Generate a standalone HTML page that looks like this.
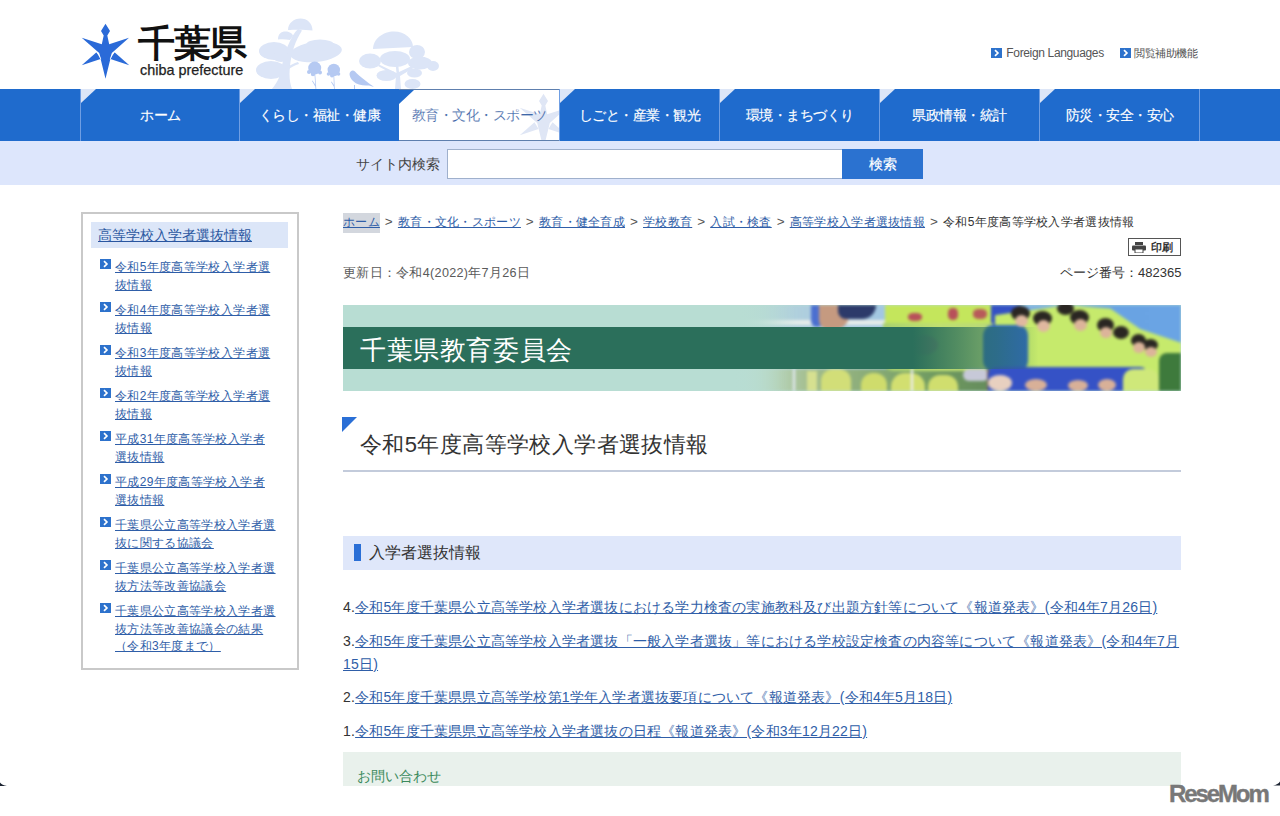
<!DOCTYPE html>
<html lang="ja">
<head>
<meta charset="utf-8">
<title>令和5年度高等学校入学者選抜情報 - 千葉県</title>
<style>
*{box-sizing:border-box;margin:0;padding:0}
html,body{width:1280px;height:816px;overflow:hidden;background:#fff}
body{position:relative;font-family:"Liberation Sans",sans-serif;color:#333}
.abs{position:absolute}
a{color:#1f5fb0;text-decoration:underline}
/* header */
#logo-txt{left:138px;top:22px;font-size:37px;font-weight:bold;color:#111;letter-spacing:-1px;line-height:44px;white-space:nowrap}
#logo-en{left:140px;top:62px;font-size:14.4px;color:#222;-webkit-text-stroke:.25px #222;line-height:16px;white-space:nowrap}
.tl{top:46px;font-size:12px;color:#555;line-height:14px;white-space:nowrap}
.ico{display:inline-block;width:11px;height:10px;vertical-align:top}
/* nav */
#nav{left:0;top:89px;width:1280px;height:52px;background:#1f6bcd}
.tab{position:absolute;top:0;width:160px;height:52px;border-left:1px solid #6f9ee3;color:#fff;font-size:14px;letter-spacing:-.5px;-webkit-text-stroke:.15px #fff;text-align:center;line-height:52px;white-space:nowrap}
.tab:before{content:"";position:absolute;left:0;top:0;border-top:14px solid #dde6f7;border-right:15px solid transparent}
.tab.act{background:#fff;color:#3f67a8;border-top:1px solid #5e7fae;border-bottom:1px solid #5e7fae;line-height:50px;overflow:hidden;border-left:0}
.tab.act:before{border-top-color:#1f6bcd;left:0}
/* search */
#sbar{left:0;top:141px;width:1280px;height:44px;background:#dde6fc}
#slabel{left:356px;top:156px;font-size:14px;color:#444;line-height:16px;white-space:nowrap}
#sinput{left:447px;top:149px;width:395px;height:30px;background:#fff;border:1px solid #9fb0cc;border-right:0}
#sbtn{left:842px;top:149px;width:81px;height:30px;background:#2b72d0;color:#fff;font-size:14px;-webkit-text-stroke:.2px #fff;line-height:30px;text-align:center}
/* sidebar */
#side{left:81px;top:212px;width:218px;height:458px;border:2px solid #c9c9c9}
#side-h{left:91px;top:222px;width:197px;height:26px;background:#dce6f8}
#side-h a{position:absolute;left:7px;top:5px;font-size:14px;line-height:16px;color:#2a56a0;white-space:nowrap}
.si{position:absolute;left:100px;width:185px}
.si .ico{position:absolute;left:0;top:2px}
.si a{position:absolute;left:15px;top:2px;width:175px;font-size:12px;letter-spacing:.35px;line-height:17.5px;color:#2f5ea8;white-space:nowrap}
/* main */
#bc{left:343px;top:214px;font-size:12px;letter-spacing:.3px;line-height:16px;color:#333;white-space:nowrap}
#bc a{color:#2f5ea8}
.sep{display:inline-block;width:18px;text-align:center;font-size:13.5px;color:#555}
#bc .hl{background:#d3d7de;padding:2px 0 4px}
#upd{left:343px;top:265px;font-size:12.6px;letter-spacing:.3px;color:#5a5a5a;line-height:16px;white-space:nowrap}
#print{left:1128px;top:238px;width:53px;height:18px;border:1px solid #555;background:#fff}
#pno{left:1060px;top:265px;width:121px;text-align:right;font-size:13px;color:#333;line-height:16px;white-space:nowrap}
#banner{left:343px;top:305px;width:838px;height:86px;background:#b8ddd3;overflow:hidden}
#title{left:360px;top:431px;font-size:22px;letter-spacing:.4px;color:#333;line-height:28px;white-space:nowrap}
#tline{left:343px;top:470px;width:838px;height:2px;background:#c3cbdb}
#tri{left:342px;top:417px;border-top:15px solid #2a6fd6;border-right:15px solid transparent;width:0;height:0}
#sec{left:343px;top:536px;width:838px;height:34px;background:#dfe7fa}
#sec i{position:absolute;left:11px;top:8px;width:7px;height:17px;background:#2a6fd6}
#sec span{position:absolute;left:26px;top:8px;font-size:16px;line-height:18px;color:#333;white-space:nowrap}
.it{position:absolute;left:343px;width:840px;font-size:14px;letter-spacing:.2px;line-height:23px;color:#333}
.it a{color:#2f5ea8}
#contact{left:343px;top:752px;width:838px;height:34px;background:#e9f1ec}
#contact span{position:absolute;left:14px;top:16px;font-size:14px;line-height:16px;color:#3b8a5c;white-space:nowrap}
#rm{left:1169px;top:781px;font-size:24px;font-weight:bold;color:#787878;letter-spacing:-2.1px;-webkit-text-stroke:.4px #787878;line-height:26px;white-space:nowrap}
</style>
</head>
<body>
<!-- header -->
<svg class="abs" style="left:76px;top:18px" width="58" height="66" viewBox="0 0 58 66">
  <g fill="#2a6ad8">
    <path d="M29.5 5.7 L34 12.9 L31.3 17.6 L33.2 26.3 L53 19.8 L35.8 35 L34.6 40 L29.5 60.7 L24.4 40 L23.2 35 L5.7 19.8 L25.8 26.3 L27.7 17.6 L25 12.9 Z"/>
    <path d="M5.7 47.3 L20.5 34.2 L24.6 41 Z"/>
    <path d="M53.3 47.3 L38.5 34.2 L34.4 41 Z"/>
  </g>
  <path d="M20.3 34 Q23.5 35.5 24.8 41.2 M38.7 34 Q35.5 35.5 34.2 41.2" stroke="#fff" stroke-width="0.8" fill="none"/>
</svg>
<div id="logo-txt" class="abs">千葉県</div>
<div id="logo-en" class="abs">chiba prefecture</div>
<svg class="abs" style="left:250px;top:14px" width="200" height="75" viewBox="0 0 200 75">
  <g fill="#dce5f7">
    <path d="M22 75 C28 68 31 60 32 52 C33 44 36 35 40 27 C43 21 45 18 48 15 L52 16.5 C49 21 46 27 44 33 C41 42 39.5 52 39.5 60 C39.5 66 40.5 71 42 75 Z"/>
    <path d="M38 16 C38 9 44 4.5 50.5 4.5 C57 4.5 62.5 9 62.5 16.5 C56 15.5 45 15.5 38 16 Z"/>
    <path d="M28 25.5 C28 20 31 17.5 35.5 17.5 C40 17.5 43 20 43 22 L40 26 C36 25 31 25 28 25.5 Z"/>
    <ellipse cx="24" cy="37" rx="15" ry="9"/>
    <ellipse cx="31" cy="43" rx="8" ry="5"/>
    <ellipse cx="21" cy="56" rx="15" ry="9"/>
    <path d="M35 55 C40 51 44 49 48 48 L49 50 C45 51 41 53 37 57 Z"/>
    <ellipse cx="66" cy="38" rx="26" ry="10" transform="rotate(-6 66 38)"/>
    <ellipse cx="70" cy="31" rx="14" ry="5.5"/>
    <path d="M123 35 C123 25 133 17.5 144 17.5 C155 17.5 163 25 163 33 Z"/>
    <ellipse cx="167" cy="38" rx="8" ry="7"/>
    <ellipse cx="120" cy="47" rx="11" ry="7.5"/>
    <ellipse cx="145" cy="45" rx="15" ry="8"/>
    <ellipse cx="170" cy="49" rx="12" ry="6.5"/>
    <ellipse cx="183" cy="52" rx="6" ry="5"/>
    <ellipse cx="136.5" cy="61.5" rx="10" ry="5.5"/>
    <ellipse cx="164.5" cy="59" rx="7.5" ry="4.5"/>
    <ellipse cx="162.5" cy="70" rx="8" ry="5"/>
    <path d="M145 75 L146 62 L128 52 L129 50.5 L146.5 59 L145 44 L147.5 44 L149 58 L166 50 L167 52 L150 62 L151 75 Z"/>
  </g>
  <g fill="#b5c9f2">
    <circle cx="64.7" cy="54" r="6.5"/>
    <circle cx="59" cy="58" r="2"/><circle cx="70" cy="58.5" r="2"/><circle cx="63" cy="60" r="2.2"/>
    <circle cx="83.8" cy="56" r="6.2"/>
    <circle cx="78.5" cy="60" r="1.8"/><circle cx="88.5" cy="60" r="1.8"/><circle cx="82" cy="61.5" r="2"/>
    <path d="M64.5 60 L65.5 75 L66.3 75 L65.2 60 Z M62 67 L65.5 73 L66 72 L62.6 66.5 Z"/>
    <path d="M83.5 62 L84 75 L84.8 75 L84.2 62 Z M81 68 L84 73 L84.6 72 L81.6 67.5 Z"/>
    <path d="M99.5 60 C100 56.5 103 55.5 105 57.5 C107 60 111 63 116 67 C119 69.5 121.5 71 124 73 L119 71.5 C113 72 107 71 103 67 C101 65 99.5 62.5 99.5 60 Z"/>
    <rect x="104" y="71" width="1" height="4"/>
  </g>
</svg>
<div class="abs tl" style="left:991px"><svg class="ico" style="margin-top:2px" width="11" height="10" viewBox="0 0 11 10"><rect width="11" height="10" fill="#2d72cc"/><path d="M4 2.2 L6.9 5 L4 7.8" stroke="#fff" stroke-width="1.7" fill="none"/></svg> <span style="margin-left:1px;letter-spacing:-.35px">Foreign Languages</span></div>
<div class="abs tl" style="left:1120px;font-size:11px"><svg class="ico" style="margin-top:2px" width="11" height="10" viewBox="0 0 11 10"><rect width="11" height="10" fill="#2d72cc"/><path d="M4 2.2 L6.9 5 L4 7.8" stroke="#fff" stroke-width="1.7" fill="none"/></svg> <span style="margin-left:0px;letter-spacing:-.45px">閲覧補助機能</span></div>

<!-- nav -->
<div id="nav" class="abs">
  <div class="tab" style="left:80px">ホーム</div>
  <div class="tab" style="left:239px">くらし・福祉・健康</div>
  <div class="tab act" style="left:399px;width:160px"><svg class="abs" style="left:115px;top:-2px" width="58" height="66" viewBox="0 0 58 66"><g fill="#dfe6f5"><path d="M29.5 5.7 L34 12.9 L31.3 17.6 L33.2 26.3 L53 19.8 L35.8 35 L34.6 40 L29.5 60.7 L24.4 40 L23.2 35 L5.7 19.8 L25.8 26.3 L27.7 17.6 L25 12.9 Z"/><path d="M5.7 47.3 L20.5 34.2 L24.6 41 Z"/><path d="M53.3 47.3 L38.5 34.2 L34.4 41 Z"/></g></svg><span style="position:relative">教育・文化・スポーツ</span></div>
  <div class="tab" style="left:559px">しごと・産業・観光</div>
  <div class="tab" style="left:719px">環境・まちづくり</div>
  <div class="tab" style="left:879px">県政情報・統計</div>
  <div class="tab" style="left:1039px">防災・安全・安心</div>
  <div class="abs" style="left:1199px;top:0;width:1px;height:52px;background:#6f9ee3"></div>
</div>
<div id="sbar" class="abs"></div>
<div id="slabel" class="abs">サイト内検索</div>
<div id="sinput" class="abs"></div>
<div id="sbtn" class="abs">検索</div>

<!-- sidebar -->
<div id="side" class="abs"></div>
<div id="side-h" class="abs"><a>高等学校入学者選抜情報</a></div>
<div class="si" style="top:257px"><svg class="ico" width="11" height="10" viewBox="0 0 11 10"><rect width="11" height="10" fill="#2d72cc"/><path d="M4 2.2 L6.9 5 L4 7.8" stroke="#fff" stroke-width="1.7" fill="none"/></svg><a>令和5年度高等学校入学者選<br>抜情報</a></div>
<div class="si" style="top:300px"><svg class="ico" width="11" height="10" viewBox="0 0 11 10"><rect width="11" height="10" fill="#2d72cc"/><path d="M4 2.2 L6.9 5 L4 7.8" stroke="#fff" stroke-width="1.7" fill="none"/></svg><a>令和4年度高等学校入学者選<br>抜情報</a></div>
<div class="si" style="top:343px"><svg class="ico" width="11" height="10" viewBox="0 0 11 10"><rect width="11" height="10" fill="#2d72cc"/><path d="M4 2.2 L6.9 5 L4 7.8" stroke="#fff" stroke-width="1.7" fill="none"/></svg><a>令和3年度高等学校入学者選<br>抜情報</a></div>
<div class="si" style="top:386px"><svg class="ico" width="11" height="10" viewBox="0 0 11 10"><rect width="11" height="10" fill="#2d72cc"/><path d="M4 2.2 L6.9 5 L4 7.8" stroke="#fff" stroke-width="1.7" fill="none"/></svg><a>令和2年度高等学校入学者選<br>抜情報</a></div>
<div class="si" style="top:429px"><svg class="ico" width="11" height="10" viewBox="0 0 11 10"><rect width="11" height="10" fill="#2d72cc"/><path d="M4 2.2 L6.9 5 L4 7.8" stroke="#fff" stroke-width="1.7" fill="none"/></svg><a>平成31年度高等学校入学者<br>選抜情報</a></div>
<div class="si" style="top:472px"><svg class="ico" width="11" height="10" viewBox="0 0 11 10"><rect width="11" height="10" fill="#2d72cc"/><path d="M4 2.2 L6.9 5 L4 7.8" stroke="#fff" stroke-width="1.7" fill="none"/></svg><a>平成29年度高等学校入学者<br>選抜情報</a></div>
<div class="si" style="top:515px"><svg class="ico" width="11" height="10" viewBox="0 0 11 10"><rect width="11" height="10" fill="#2d72cc"/><path d="M4 2.2 L6.9 5 L4 7.8" stroke="#fff" stroke-width="1.7" fill="none"/></svg><a>千葉県公立高等学校入学者選<br>抜に関する協議会</a></div>
<div class="si" style="top:558px"><svg class="ico" width="11" height="10" viewBox="0 0 11 10"><rect width="11" height="10" fill="#2d72cc"/><path d="M4 2.2 L6.9 5 L4 7.8" stroke="#fff" stroke-width="1.7" fill="none"/></svg><a>千葉県公立高等学校入学者選<br>抜方法等改善協議会</a></div>
<div class="si" style="top:601px"><svg class="ico" width="11" height="10" viewBox="0 0 11 10"><rect width="11" height="10" fill="#2d72cc"/><path d="M4 2.2 L6.9 5 L4 7.8" stroke="#fff" stroke-width="1.7" fill="none"/></svg><a>千葉県公立高等学校入学者選<br>抜方法等改善協議会の結果<br>（令和3年度まで）</a></div>

<!-- main -->
<div id="bc" class="abs"><a class="hl">ホーム</a><span class="sep">&gt;</span><a>教育・文化・スポーツ</a><span class="sep">&gt;</span><a>教育・健全育成</a><span class="sep">&gt;</span><a>学校教育</a><span class="sep">&gt;</span><a>入試・検査</a><span class="sep">&gt;</span><a>高等学校入学者選抜情報</a><span class="sep">&gt;</span>令和5年度高等学校入学者選抜情報</div>
<div id="print" class="abs"><svg class="abs" style="left:3px;top:3px" width="14" height="11" viewBox="0 0 14 11"><g fill="#444"><rect x="3" y="0" width="8" height="3"/><rect x="0" y="3.5" width="14" height="5" rx="1"/><rect x="3" y="7" width="8" height="4" fill="#fff" stroke="#444" stroke-width="1"/></g></svg><span class="abs" style="left:22px;top:2px;font-size:11px;line-height:13px;color:#333;font-weight:bold">印刷</span></div>
<div id="upd" class="abs">更新日：令和4(2022)年7月26日</div>
<div id="pno" class="abs">ページ番号：482365</div>
<div id="banner" class="abs">
  <div class="abs" id="photo" style="left:390px;top:0;width:448px;height:86px;overflow:hidden;-webkit-mask-image:linear-gradient(90deg,transparent 0,rgba(0,0,0,.35) 6%,rgba(0,0,0,.8) 11%,#000 16%);mask-image:linear-gradient(90deg,transparent 0,rgba(0,0,0,.35) 6%,rgba(0,0,0,.8) 11%,#000 16%)">
   <div style="position:absolute;left:0;top:0;width:448px;height:86px;filter:blur(1.8px)">
    <div class="abs" style="left:0;top:0;width:448px;height:64px;background:linear-gradient(90deg,#b7d3d9 0,#a9cbe0 25%,#8fbde6 55%,#68a2e2 80%,#6aa4e4 100%)"></div>
    <div class="abs" style="left:0;top:15px;width:170px;height:5px;background:#e6ecea"></div>
    <div class="abs" style="left:0;top:64px;width:448px;height:22px;background:linear-gradient(90deg,#c9dcc0 0,#9cb888 20%,#6f9a60 45%,#5b7e58 70%,#3d6a3c 100%)"></div>
    <div class="abs" style="left:78px;top:0;width:12px;height:22px;background:#4b6fd0;border-radius:0 0 6px 6px"></div>
    <div class="abs" style="left:86px;top:0;width:30px;height:25px;background:#c59a80;border-radius:0 0 15px 10px"></div>
    <div class="abs" style="left:105px;top:0;width:38px;height:14px;background:#2c3a6a;border-radius:0 0 18px 10px"></div>
    <div class="abs" style="left:152px;top:0;width:120px;height:24px;background:#c4e65c"></div>
    <div class="abs" style="left:175px;top:8px;width:14px;height:8px;background:#b8505a;border-radius:40%"></div>
    <div class="abs" style="left:215px;top:3px;width:10px;height:12px;background:#b8505a;border-radius:40%"></div>
    <div class="abs" style="left:240px;top:4px;width:14px;height:10px;background:#b85a5a;border-radius:40%"></div>
    <div class="abs" style="left:258px;top:0;width:30px;height:22px;background:#3451c4"></div>
    <div class="abs" style="left:150px;top:18px;width:110px;height:48px;background:linear-gradient(90deg,#a8d070,#c0e070 50%,#b8d878);border-radius:0 0 10px 10px"></div>
    <div class="abs" style="left:175px;top:30px;width:30px;height:20px;background:#c89a80;border-radius:50%"></div>
    <div class="abs" style="left:74px;top:66px;width:10px;height:20px;background:#d6e090"></div>
    <div class="abs" style="left:88px;top:64px;width:30px;height:22px;background:#d2de78;border-radius:12px 12px 0 0"></div>
    <div class="abs" style="left:128px;top:68px;width:26px;height:18px;background:#cfdc6c;border-radius:12px 12px 0 0"></div>
    <div class="abs" style="left:158px;top:68px;width:34px;height:18px;background:#d2df70;border-radius:14px 14px 0 0"></div>
    <div class="abs" style="left:195px;top:70px;width:30px;height:16px;background:#d0de6e;border-radius:12px 12px 0 0"></div>
    <div class="abs" style="left:230px;top:64px;width:26px;height:12px;background:#c7c9d8;border-radius:10px"></div>
    <div class="abs" style="left:254px;top:64px;width:22px;height:22px;background:#8a6850"></div>
    <div class="abs" style="left:60px;top:64px;width:2px;height:22px;background:#eef"></div>
    <div class="abs" style="left:178px;top:64px;width:2px;height:22px;background:#eef"></div>
    <div class="abs" style="left:290px;top:64px;width:2px;height:22px;background:#eef"></div>
    <div class="abs" style="left:262px;top:0;width:186px;height:86px;background:#c6ea6c;clip-path:polygon(0 12%,38% 0,62% 4%,78% 28%,100% 44%,100% 100%,0 100%)"></div>
    <div class="abs" style="left:250px;top:20px;width:45px;height:46px;background:#2f6ab0;border-radius:10px"></div>
    <div class="abs" style="left:426px;top:48px;width:22px;height:38px;background:#3e7a3c;border-radius:8px 0 0 0"></div>
    <div class="abs" style="left:278px;top:1px;width:19px;height:15px;background:#2a2622;border-radius:50%"></div>
    <div class="abs" style="left:300px;top:6px;width:19px;height:15px;background:#2a2622;border-radius:50%"></div>
    <div class="abs" style="left:324px;top:-3px;width:17px;height:13px;background:#2a2622;border-radius:50%"></div>
    <div class="abs" style="left:337px;top:5px;width:19px;height:15px;background:#2a2622;border-radius:50%"></div>
    <div class="abs" style="left:364px;top:13px;width:17px;height:14px;background:#2a2622;border-radius:50%"></div>
    <div class="abs" style="left:380px;top:21px;width:16px;height:13px;background:#2a2622;border-radius:50%"></div>
    <div class="abs" style="left:398px;top:29px;width:15px;height:13px;background:#2a2622;border-radius:50%"></div>
    <div class="abs" style="left:410px;top:34px;width:15px;height:12px;background:#2a2622;border-radius:50%"></div>
    <div class="abs" style="left:282px;top:10px;width:13px;height:12px;background:#e0b8a0;border-radius:50%"></div>
    <div class="abs" style="left:304px;top:15px;width:13px;height:12px;background:#e0b8a0;border-radius:50%"></div>
    <div class="abs" style="left:341px;top:14px;width:13px;height:12px;background:#dcb49a;border-radius:50%"></div>
    <div class="abs" style="left:367px;top:22px;width:12px;height:11px;background:#dcb49a;border-radius:50%"></div>
    <div class="abs" style="left:400px;top:37px;width:12px;height:11px;background:#dcb49a;border-radius:50%"></div>
    <div class="abs" style="left:412px;top:42px;width:12px;height:10px;background:#dcb49a;border-radius:50%"></div>
    <div class="abs" style="left:255px;top:62px;width:160px;height:24px;background:#3552c6;border-radius:8px 8px 0 0"></div>
    <div class="abs" style="left:255px;top:70px;width:24px;height:16px;background:#e8d0c0;border-radius:50%"></div>
    <div class="abs" style="left:292px;top:74px;width:22px;height:12px;background:#d8b098;border-radius:50%"></div>
    <div class="abs" style="left:335px;top:75px;width:20px;height:11px;background:#d8b098;border-radius:50%"></div>
    <div class="abs" style="left:365px;top:74px;width:18px;height:12px;background:#d8b098;border-radius:50%"></div>
    <div class="abs" style="left:390px;top:64px;width:36px;height:22px;background:#cfe87a;border-radius:10px 10px 0 0"></div>
   </div>
  </div>
  <div class="abs" style="left:0;top:0;width:838px;height:86px;background:linear-gradient(90deg,#b8ddd3 0,#b8ddd3 46%,rgba(184,221,211,.85) 48%,rgba(184,221,211,.4) 51%,rgba(184,221,211,0) 54%)"></div>
  <div class="abs" style="left:0;top:22px;width:838px;height:42px;background:linear-gradient(90deg,#2b6f5b 0,#2b6f5b 68%,rgba(43,111,91,.75) 73%,rgba(43,111,91,.45) 78%,rgba(43,111,91,0) 83%)"></div>
  <div class="abs" style="left:17px;top:30px;font-size:26px;letter-spacing:.6px;line-height:30px;color:#fff;white-space:nowrap">千葉県教育委員会</div>
</div>
<div id="tri" class="abs"></div>
<div id="title" class="abs">令和5年度高等学校入学者選抜情報</div>
<div id="tline" class="abs"></div>
<div id="sec" class="abs"><i></i><span>入学者選抜情報</span></div>
<div class="it" style="top:596px">4.<a>令和5年度千葉県公立高等学校入学者選抜における学力検査の実施教科及び出題方針等について《報道発表》(令和4年7月26日)</a></div>
<div class="it" style="top:630px">3.<a>令和5年度千葉県公立高等学校入学者選抜「一般入学者選抜」等における学校設定検査の内容等について《報道発表》(令和4年7月15日)</a></div>
<div class="it" style="top:686px">2.<a>令和5年度千葉県県立高等学校第1学年入学者選抜要項について《報道発表》(令和4年5月18日)</a></div>
<div class="it" style="top:720px">1.<a>令和5年度千葉県県立高等学校入学者選抜の日程《報道発表》(令和3年12月22日)</a></div>
<div id="contact" class="abs"><span>お問い合わせ</span></div>
<div id="rm" class="abs">ReseMom</div>
<svg class="abs" style="left:0;top:780px" width="8" height="7"><path d="M0 2.5 Q2 5 7 6 L0 6 Z" fill="#1b2331"/></svg>
<svg class="abs" style="left:1272px;top:780px" width="8" height="7"><path d="M8 1.5 Q6 4.5 1 5.5 L8 5.5 Z" fill="#1b2331"/></svg>
</body>
</html>
